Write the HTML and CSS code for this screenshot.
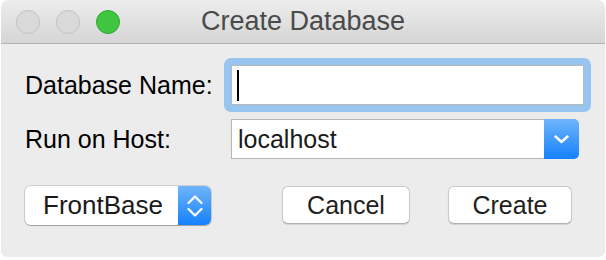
FILE: index.html
```html
<!DOCTYPE html>
<html lang="en">

<head>
    <meta charset="UTF-8">
    <meta name="viewport" content="width=device-width, initial-scale=1.0">
    <title>Create Database</title>
    <link rel="stylesheet" href="styles.css">
</head>

<body>
    <div class="window">
        <header class="titlebar">
            <div class="lights">
                <span class="light"></span>
                <span class="light"></span>
                <span class="light zoom"></span>
            </div>
            <h1 class="title">Create Database</h1>
            <div></div>
        </header>

        <form class="content">
            <div class="row">
                <label class="label">Database Name:</label>
                <div class="focus-ring">
                    <div class="field"><span class="caret"></span></div>
                </div>
            </div>

            <div class="row host">
                <label class="label">Run on Host:</label>
                <div class="select">
                    <span class="select-value">localhost</span>
                    <span class="select-arrow">
                        <svg width="15" height="9" viewBox="0 0 15 9">
                            <polyline points="1.5,1.5 7.5,7 13.5,1.5" fill="none" stroke="#fff" stroke-width="2.4" stroke-linecap="round" stroke-linejoin="round" />
                        </svg>
                    </span>
                </div>
            </div>

            <div class="actions">
                <div class="popup">
                    <span class="popup-value">FrontBase</span>
                    <span class="popup-arrows">
                        <svg width="16" height="22" viewBox="0 0 16 22">
                            <polyline points="1.5,8 8,1.5 14.5,8" fill="none" stroke="#fff" stroke-width="2.2" stroke-linecap="round" stroke-linejoin="round" />
                            <polyline points="1.5,14 8,20.5 14.5,14" fill="none" stroke="#fff" stroke-width="2.2" stroke-linecap="round" stroke-linejoin="round" />
                        </svg>
                    </span>
                </div>
                <button type="button" class="button cancel">Cancel</button>
                <button type="button" class="button create">Create</button>
            </div>
        </form>
    </div>
</body>

</html>
```

FILE: styles.css
```css
body {
    margin: 0;
    background: #fff;
    font-family: 'Liberation Sans', Arial, sans-serif;
}

.window {
    width: 604px;
    height: 257px;
    margin-left: 1px;
    background: #ececec;
    border-radius: 8px 8px 6px 6px;
    overflow: hidden;
}

/* Title bar */
.titlebar {
    display: grid;
    grid-template-columns: 1fr auto 1fr;
    align-items: center;
    height: 43px;
    background: linear-gradient(#ededed, #d5d5d5);
    border-bottom: 1px solid #b3b3b3;
}

.lights {
    display: flex;
    gap: 16px;
    padding-left: 15px;
}

.light {
    width: 22px;
    height: 22px;
    border-radius: 50%;
    background: #dadada;
    border: 1px solid #c2c2c2;
}

.light.zoom {
    background: #3fc53f;
    border-color: #2eaa2e;
}

.title {
    margin: 0;
    font-size: 27px;
    font-weight: normal;
    color: #4a4a4a;
}

/* Form */
.content {
    padding: 14px 0 0 24px;
    color: #000;
    font-size: 25px;
}

.row {
    display: flex;
    align-items: center;
}

.label {
    width: 199px;
}

.focus-ring {
    padding: 7px;
    border-radius: 7px;
    background: #98c4f0;
}

.field {
    width: 351px;
    height: 38px;
    border: 1px solid #b8b8b8;
    background: #fff;
    display: flex;
    align-items: center;
}

.caret {
    width: 2px;
    height: 31px;
    margin-left: 5px;
    background: #000;
}

.row.host {
    margin-top: 7px;
}

.select {
    display: flex;
    width: 348px;
    height: 40px;
    margin-left: 7px;
}

.select-value {
    flex: 1;
    border: 1px solid #b5b5b5;
    border-right: none;
    background: #fff;
    padding-left: 6px;
    line-height: 38px;
    color: #1a1a1a;
}

.select-arrow,
.popup-arrows {
    display: flex;
    align-items: center;
    justify-content: center;
    background: linear-gradient(#6fb5fb, #1581fb);
}

.select-arrow {
    width: 35px;
    border-radius: 0 5px 5px 0;
}

/* Bottom row */
.actions {
    display: flex;
    align-items: flex-start;
    margin-top: 27px;
}

.popup {
    display: flex;
    width: 186px;
    height: 39px;
    margin-right: 71px;
    border-radius: 6px;
    box-shadow: 0 0 0 1px rgba(0, 0, 0, 0.13), 0 1px 1px rgba(0, 0, 0, 0.22);
}

.popup-value {
    flex: 1;
    background: #fff;
    border-radius: 6px 0 0 6px;
    padding-left: 18px;
    font-size: 26px;
    line-height: 39px;
    color: #1a1a1a;
}

.popup-arrows {
    width: 33px;
    border-radius: 0 6px 6px 0;
}

.button {
    height: 38px;
    padding: 0;
    background: #fff;
    border: 1px solid #c9c9c9;
    border-bottom-color: #b0b0b0;
    border-radius: 6px;
    box-shadow: 0 1px 1px rgba(0, 0, 0, 0.12);
    font-family: inherit;
    font-size: 25px;
    color: #1e1e1e;
}

.button.cancel {
    width: 128px;
    margin-right: 38px;
}

.button.create {
    width: 124px;
}
```
